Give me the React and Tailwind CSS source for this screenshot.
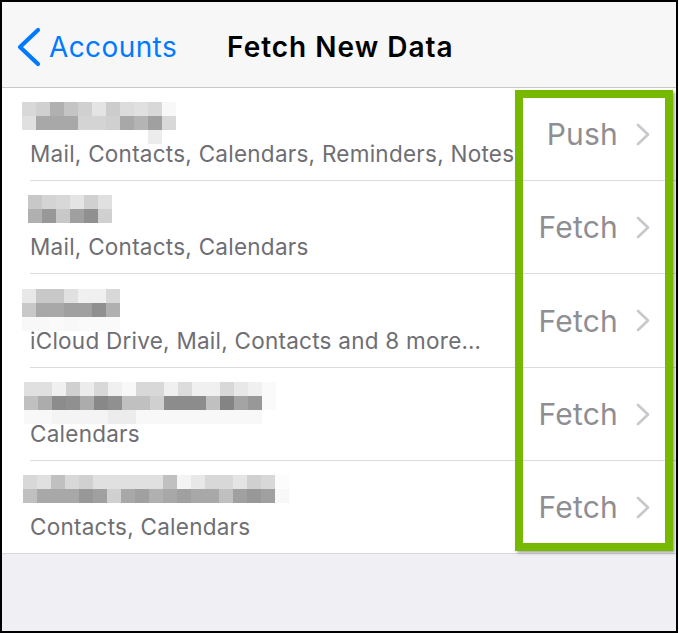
import React from 'react';

// pixelated (blurred-out) account names, one array of shades per block row
const accounts = [
  {
    x: 20,
    blocks: [
      ['#d8d8d8', '#d0d0d0', '#b0b0b0', '#c4c4c4', '#d0d0d0', '#e4e4e4', '#cccccc', '#dcdcdc', '#e0e0e0', '#d8d8d8', '#f8f8f8'],
      ['#e0e0e0', '#a8a8a8', '#a8a8a8', '#a8a8a8', '#d4d4d4', '#d4d4d4', '#d0d0d0', '#a8a8a8', '#b4b4b4', '#a0a0a0', '#d8d8d8'],
      ['#fff', '#fff', '#fff', '#fff', '#fff', '#fff', '#fff', '#fff', '#fff', '#ececec', '#fff'],
    ],
    sub: 'Mail, Contacts, Calendars, Reminders, Notes',
    value: 'Push',
  },
  {
    x: 26,
    blocks: [
      ['#c8c8c8', '#d4d4d4', '#d8d8d8', '#e4e4e4', '#d0d0d0', '#e0e0e0'],
      ['#b0b0b0', '#989898', '#c8c8c8', '#a0a0a0', '#909090', '#d0d0d0'],
    ],
    sub: 'Mail, Contacts, Calendars',
    value: 'Fetch',
  },
  {
    x: 20,
    blocks: [
      ['#e8e8e8', '#c8c8c8', '#c8c8c8', '#e0e0e0', '#f0f0f0', '#f0f0f0', '#d8d8d8'],
      ['#c8c8c8', '#a8a8a8', '#a8a8a8', '#a0a0a0', '#a0a0a0', '#909090', '#b0b0b0'],
      ['#f8f8f8', '#f8f8f8', '#fafafa', '#f8f8f8', '#fafafa', '#fafafa', '#fafafa'],
    ],
    sub: 'iCloud Drive, Mail, Contacts and 8 more…',
    value: 'Fetch',
  },
  {
    x: 22,
    blocks: [
      ['#e0e0e0', '#e0e0e0', '#f0f0f0', '#d0d0d0', '#ececec', '#d8d8d8', '#f0f0f0', '#f8f8f8', '#d8d8d8', '#d8d8d8', '#f0f0f0', '#dcdcdc', '#f0f0f0', '#f0f0f0', '#d8d8d8', '#e8e8e8', '#f0f0f0', '#fafafa'],
      ['#c0c0c0', '#acacac', '#8c8c8c', '#909090', '#acacac', '#888888', '#909090', '#c0c0c0', '#c0c0c0', '#d0d0d0', '#8c8c8c', '#8c8c8c', '#8c8c8c', '#c0c0c0', '#848484', '#a4a4a4', '#989898', '#fafafa'],
      ['#f8f8f8', '#f8f8f8', '#f4f4f4', '#f4f4f4', '#f4f4f4', '#f4f4f4', '#ececec', '#ececec', '#f8f8f8', '#f8f8f8', '#f8f8f8', '#f8f8f8', '#f8f8f8', '#f8f8f8', '#f8f8f8', '#f8f8f8', '#f8f8f8', '#fff'],
    ],
    sub: 'Calendars',
    value: 'Fetch',
  },
  {
    x: 21,
    blocks: [
      ['#d8d8d8', '#e0e0e0', '#c0c0c0', '#d8d8d8', '#d0d0d0', '#e0e0e0', '#e0e0e0', '#e0e0e0', '#e0e0e0', '#e0e0e0', '#c0c0c0', '#f4f4f4', '#e8e8e8', '#d8d8d8', '#d8d8d8', '#e4e4e4', '#d0d0d0', '#d8d8d8', '#fcfcfc'],
      ['#c0c0c0', '#a8a8a8', '#a8a8a8', '#a8a8a8', '#989898', '#a0a0a0', '#d0d0d0', '#a8a8a8', '#a0a0a0', '#b0b0b0', '#a8a8a8', '#a0a0a0', '#a8a8a8', '#a8a8a8', '#c0c0c0', '#a0a0a0', '#989898', '#a0a0a0', '#f8f8f8'],
    ],
    sub: 'Contacts, Calendars',
    value: 'Fetch',
  },
];

function Mosaic({ blocks, x }) {
  return (
    <div className="flex flex-col h-[29px]" style={{ marginLeft: x }}>
      {blocks.map((row, i) => (
        <div key={i} className="flex">
          {row.map((c, j) => (
            <div key={j} className="w-[14px] h-[14px] shrink-0" style={{ background: c }} />
          ))}
        </div>
      ))}
    </div>
  );
}

function Chevron() {
  return (
    <svg width="14" height="23" viewBox="0 0 14 23" fill="none">
      <polyline points="2,2 12,11.5 2,21" stroke="#c7c7cc" strokeWidth="2.6" strokeLinecap="round" strokeLinejoin="round" />
    </svg>
  );
}

export default function App() {
  return (
    <div className="w-[679px] h-[633px] bg-white" style={{ fontFamily: 'Inter, "Noto Sans", sans-serif' }}>
      <div className="relative w-[678px] h-[633px] border-2 border-black bg-[#efeff4] overflow-hidden">
        <div className="h-[86px] pt-[5px] bg-[#f7f7f8] border-b border-[#c8c7cc] flex items-center">
          <div className="flex items-center pl-[14px] text-[#007aff]">
            <svg width="26" height="40" viewBox="0 0 26 40" fill="none">
              <polyline points="22,3 4,20 22,37" stroke="#007aff" strokeWidth="4.2" strokeLinecap="round" strokeLinejoin="round" />
            </svg>
            <span className="ml-[7px] text-[28px] tracking-[0.4px] leading-none">Accounts</span>
          </div>
          <span className="ml-[50px] text-[28px] font-semibold text-black leading-none tracking-[1px]">Fetch New Data</span>
        </div>

        <div className="bg-white">
          {accounts.map((a, i) => (
            <div key={i}>
              <div className={(i === 2 ? 'h-[93px]' : 'h-[92px]') + ' flex items-center justify-between'}>
                <div className="flex flex-col pt-[1px]">
                  <Mosaic blocks={a.blocks} x={a.x} />
                  <div className="pl-[28px] mt-[10px] text-[22.5px] tracking-[0.25px] leading-[26px] text-[#6e6e73] whitespace-nowrap">{a.sub}</div>
                </div>
                <div className="flex items-center gap-[18px] pr-[26px]">
                  <span className="text-[30px] leading-none tracking-[0.2px] text-[#8e8e93]">{a.value}</span>
                  <Chevron />
                </div>
              </div>
              <div className={i === accounts.length - 1 ? 'h-px bg-[#d8d8dc]' : 'ml-[28px] h-px bg-[#dcdce0]'} />
            </div>
          ))}
        </div>

        {/* highlight frame over the Push/Fetch column */}
        <div className="absolute left-[513px] top-[88px] w-[158px] h-[461px] border-[8px] border-[#76b900] shadow-[2px_2px_3px_rgba(0,0,0,0.35)]" />
      </div>
    </div>
  );
}
